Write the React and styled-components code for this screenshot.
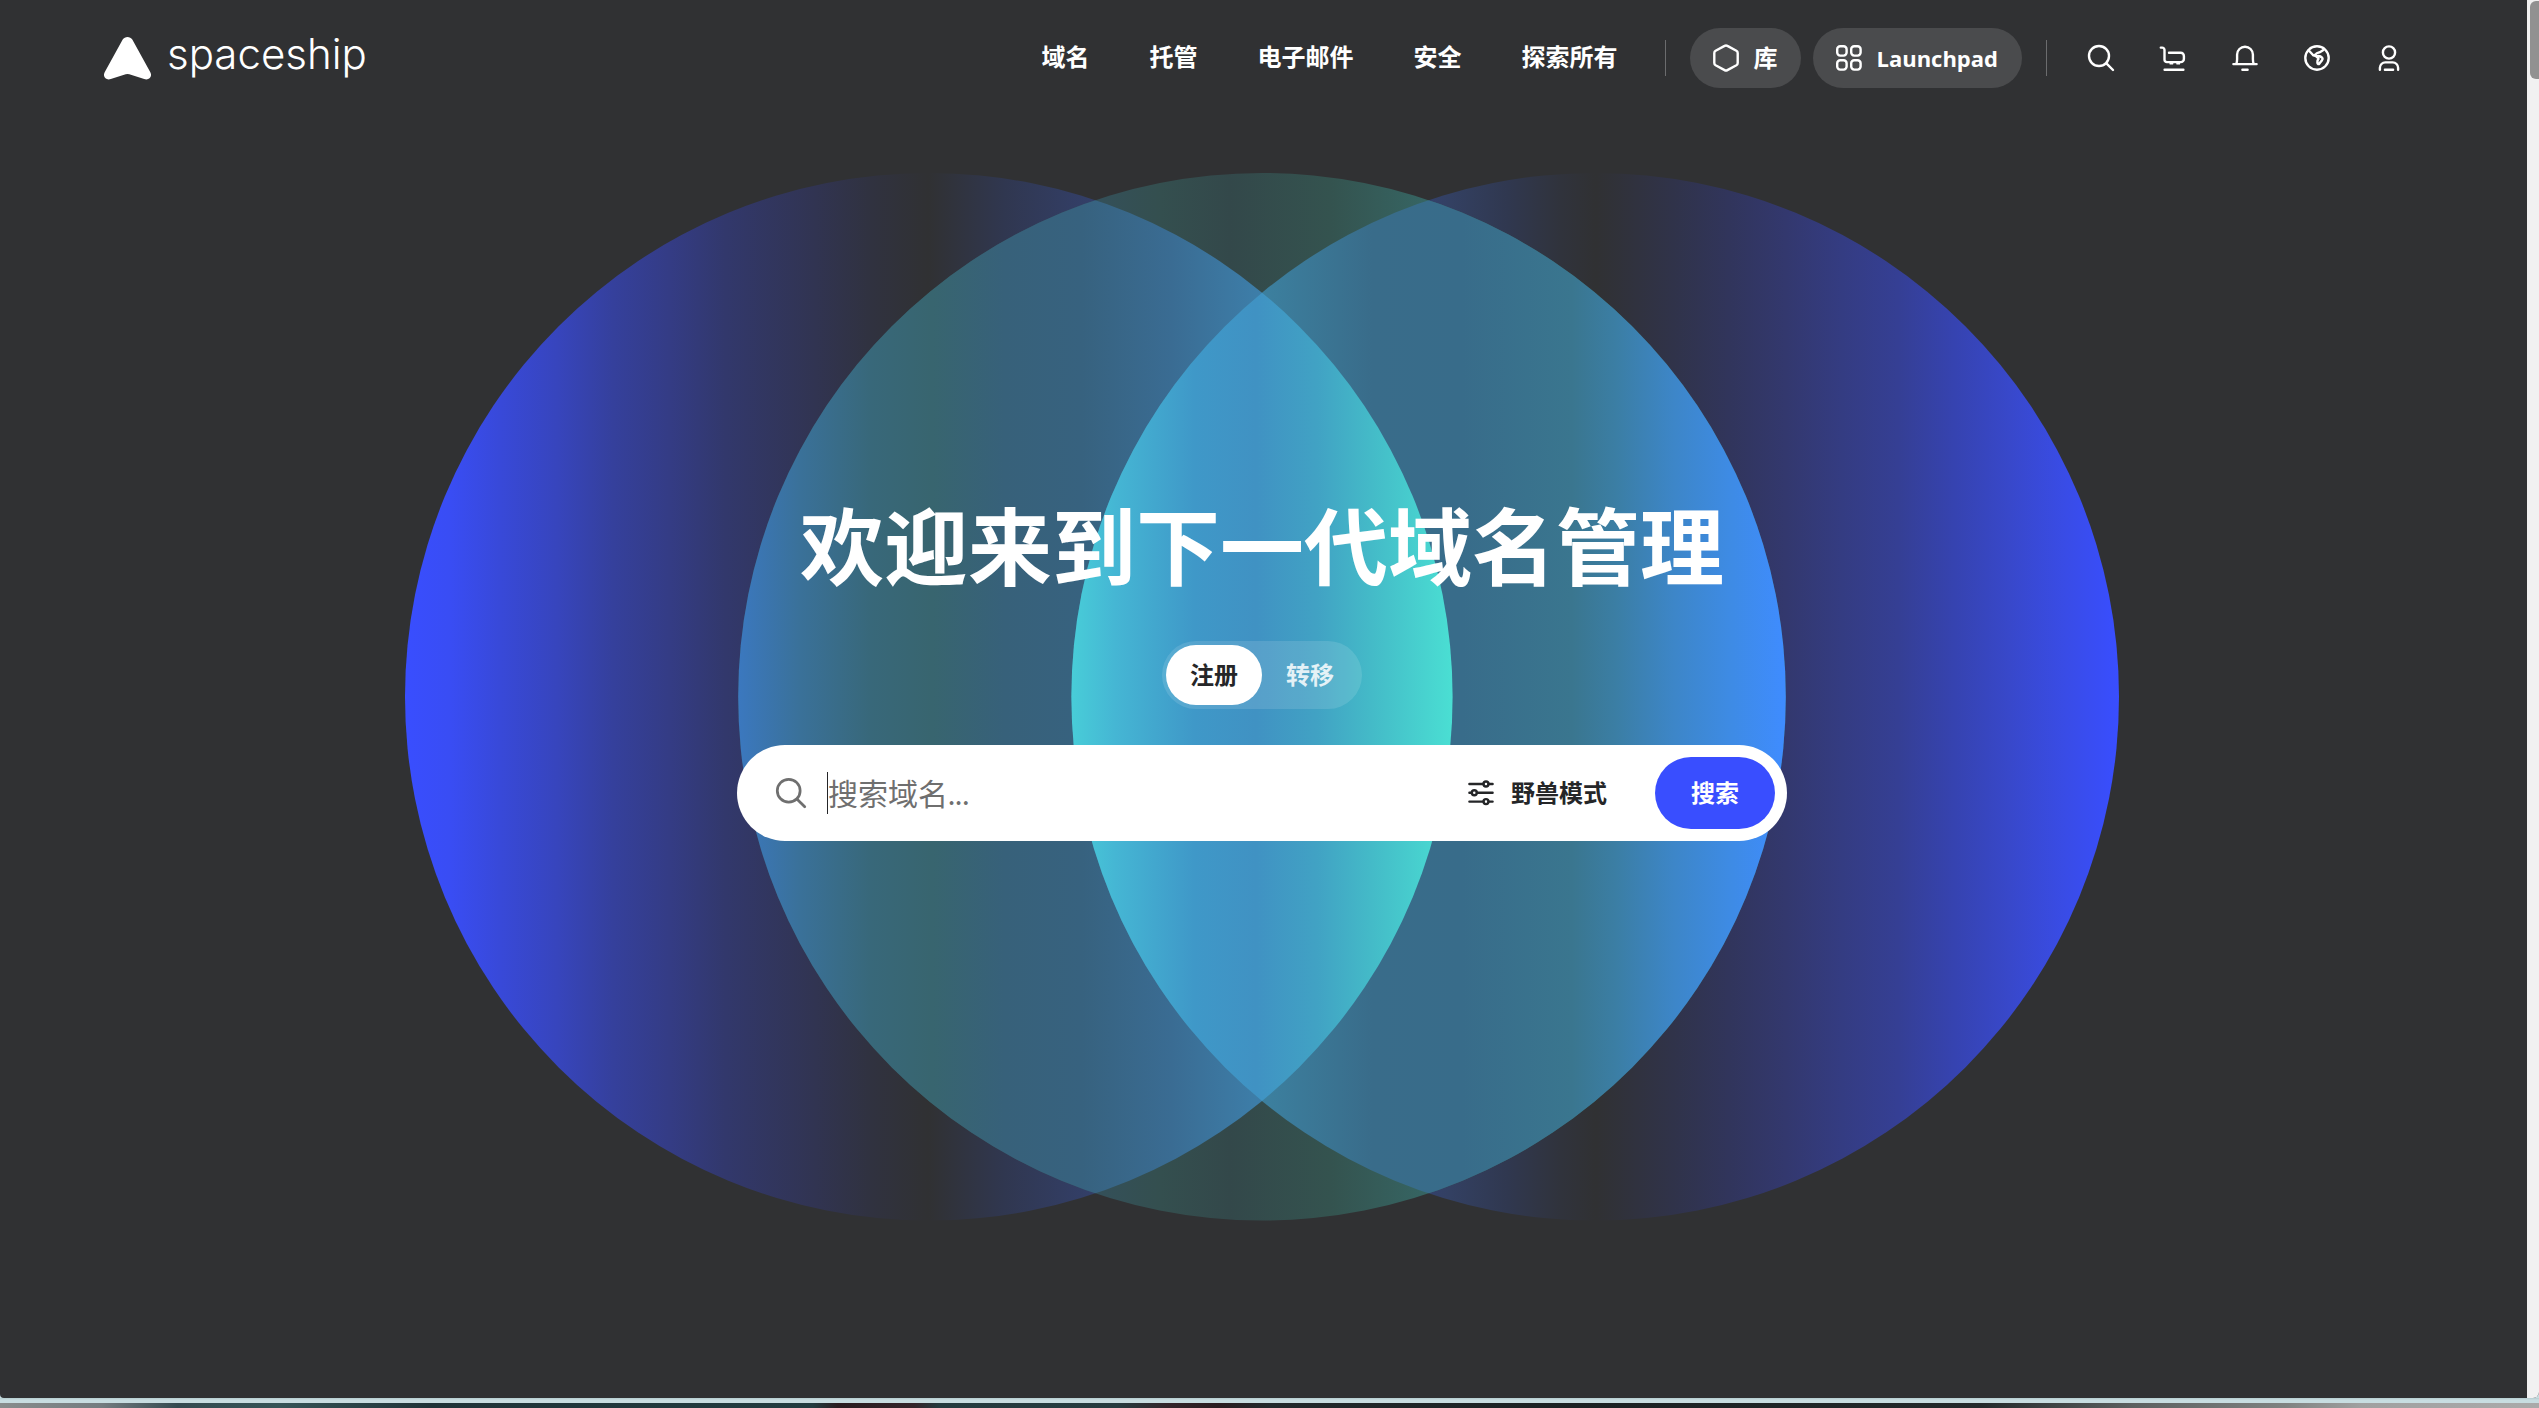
import React, { useState } from 'react';
import styled, { createGlobalStyle } from 'styled-components';

const navLinks = ['域名', '托管', '电子邮件', '安全', '探索所有'];

const modes = [
  { id: 'register', label: '注册' },
  { id: 'transfer', label: '转移' },
];

// gradient stops of every zone of the three circles, [x, colour]
const zones = {
  left: [
    [405, '#394eff'], [450, '#394df4'], [501, '#3849d8'], [557, '#3745bd'], [613, '#35409c'],
    [669, '#343c85'], [725, '#32386c'], [814, '#313452'], [870, '#303240'], [928, '#303133'],
    [1004, '#303750'], [1090, '#333f68'], [1452, '#394eff'],
  ],
  right: [
    [1071, '#394eff'], [1450, '#334062'], [1506, '#303850'], [1560, '#30333c'], [1595, '#303133'], [1673, '#30334a'],
    [1729, '#31355c'], [1785, '#33386e'], [1841, '#343c82'], [1897, '#353f94'], [1953, '#3643b0'],
    [2008, '#3848ca'], [2064, '#394ce6'], [2118, '#394eff'],
  ],
  middle: [[1094, '#34505a'], [1160, '#344f4f'], [1230, '#33484a'], [1330, '#34534f'], [1428, '#366563']],
  leftMiddle: [
    [738, '#3b78bf'], [800, '#3a7199'], [870, '#38687a'], [932, '#38656f'], [1004, '#37617a'],
    [1082, '#37627f'], [1171, '#3a6c93'], [1255, '#3d7da8'],
  ],
  middleRight: [
    [1268, '#3c7f9e'], [1372, '#396c8a'], [1461, '#386c8a'], [1571, '#3a768f'], [1615, '#3b7ea4'],
    [1673, '#3d86c8'], [1729, '#3e8be4'], [1785, '#3f8cff'],
  ],
  center: [
    [1071, '#48cdd8'], [1115, '#45b6d4'], [1194, '#3f98c8'], [1255, '#4092c3'], [1316, '#41a2c4'],
    [1372, '#44bbc8'], [1452, '#4adfd3'],
  ],
};

const HexIcon = () => (
  <Icon viewBox="0 0 28 28" aria-hidden="true">
    <path d="M12.6 1.9a2.8 2.8 0 0 1 2.8 0l9 4.9a2.6 2.6 0 0 1 1.3 2.3v9.8a2.6 2.6 0 0 1-1.3 2.3l-9 4.9a2.8 2.8 0 0 1-2.8 0l-9-4.9a2.6 2.6 0 0 1-1.3-2.3V9.1a2.6 2.6 0 0 1 1.3-2.3z" />
  </Icon>
);

const GridIcon = () => (
  <Icon viewBox="0 0 28 28" aria-hidden="true">
    <rect x="2.2" y="2.2" width="9.4" height="9.4" rx="3" />
    <rect x="16.2" y="2.2" width="9.4" height="9.4" rx="3" />
    <rect x="2.2" y="16.2" width="9.4" height="9.4" rx="3" />
    <rect x="16.2" y="16.2" width="9.4" height="9.4" rx="3" />
  </Icon>
);

const SearchIcon = ({ size }) => (
  <Icon viewBox="0 0 28 28" $size={size} aria-hidden="true">
    <circle cx="12" cy="12" r="10" />
    <path d="M19.4 19.4L26 26" />
  </Icon>
);

const CartIcon = () => (
  <Icon viewBox="0 0 28 28" aria-hidden="true">
    <path d="M1.8 3.6h1.4a2.3 2.3 0 0 1 2.3 2.3v9.8a2.4 2.4 0 0 0 2.4 2.4h13.8a3.2 3.2 0 0 0 3.2-3.2v-3a3.2 3.2 0 0 0-3.2-3.2H10" />
    <path d="M11.6 19.4h1.6M18.4 19.4H20M5.6 25.7h18.8" />
  </Icon>
);

const BellIcon = () => (
  <Icon viewBox="0 0 28 28" aria-hidden="true">
    <path d="M2.4 20.1h23.2M5.2 20.1c.7-1.5.9-3 .9-4.8v-4.7a7.9 7.9 0 0 1 15.8 0v4.7c0 1.8.2 3.3.9 4.8M11.4 25.7h5.2" />
  </Icon>
);

const GlobeIcon = () => (
  <Icon viewBox="0 0 28 28" aria-hidden="true">
    <circle cx="14" cy="14" r="11.7" />
    <path d="M5.6 6.2l4.2 4.6c1 1 2.4.4 3-.6.8-1.6 3-1.4 4.4-2.3l3.2-2" />
    <path d="M11 11.2l2.4 1.2c2-.8 4.2-.4 5.9 1.5.6.8.3 1.6-.3 2.3l-2.6 3.4c-.8.9-1.9.5-2-.6l.1-2.2c.1-.8 1-1.4 1-2.1 0-.9-1.7-.9-2.1-2.3" />
  </Icon>
);

const UserIcon = () => (
  <Icon viewBox="0 0 28 28" aria-hidden="true">
    <circle cx="14" cy="8.5" r="6.1" />
    <path d="M4.9 25.7v-1.9a5.4 5.4 0 0 1 5.4-5.4h7.4a5.4 5.4 0 0 1 5.4 5.4v1.9M9.9 25.7h8.2" />
  </Icon>
);

const SlidersIcon = () => (
  <Icon viewBox="0 0 28 28" aria-hidden="true">
    <path d="M2.4 5h14M21.6 5h4M2.4 13.8h2.3M9.9 13.8h15.7M2.4 22.6h14M21.6 22.6h4" />
    <circle cx="19" cy="5" r="2.5" />
    <circle cx="7.3" cy="13.8" r="2.5" />
    <circle cx="19" cy="22.6" r="2.5" />
  </Icon>
);

const Circles = () => (
  <Art viewBox="405 173 1713 1047" aria-hidden="true">
    <defs>
      {Object.entries(zones).map(([name, stops]) => {
        const start = stops[0][0];
        const end = stops[stops.length - 1][0];
        return (
          <linearGradient key={name} id={name} gradientUnits="userSpaceOnUse" x1={start} x2={end} y1="0" y2="0">
            {stops.map(([x, color]) => (
              <stop key={x} offset={(x - start) / (end - start)} stopColor={color} />
            ))}
          </linearGradient>
        );
      })}
      <clipPath id="insideLeft">
        <circle cx="928.5" cy="696.5" r="523.5" />
      </clipPath>
      <clipPath id="insideRight">
        <circle cx="1594.5" cy="696.5" r="523.5" />
      </clipPath>
    </defs>
    <circle cx="928.5" cy="696.5" r="523.5" fill="url(#left)" />
    <circle cx="1594.5" cy="696.5" r="523.5" fill="url(#right)" />
    <circle cx="1261.5" cy="696.5" r="523.5" fill="url(#middle)" />
    <circle cx="1261.5" cy="696.5" r="523.5" fill="url(#leftMiddle)" clipPath="url(#insideLeft)" />
    <circle cx="1261.5" cy="696.5" r="523.5" fill="url(#middleRight)" clipPath="url(#insideRight)" />
    <circle cx="928.5" cy="696.5" r="523.5" fill="url(#center)" clipPath="url(#insideRight)" />
  </Art>
);

const App = () => {
  const [mode, setMode] = useState('register');

  return (
    <Screen>
      <GlobalStyle />
      <Browser>
        <Page>
          <Header>
            <Logo href="#">
              <LogoMark viewBox="0 0 47 43" aria-hidden="true">
                <path d="M18.7 2.6C20.8-.8 26.2-.8 28.3 2.6L46.2 35.1C48.7 39.7 45.2 43.6 40.2 42.1L25.3 37.2Q23.5 36.7 21.7 37.2L6.8 42.1C1.8 43.6-1.7 39.7.8 35.1Z" />
              </LogoMark>
              <LogoText>spaceship</LogoText>
            </Logo>
            <Nav>
              {navLinks.map(link => (
                <NavLink key={link} href="#">{link}</NavLink>
              ))}
            </Nav>
            <Divider />
            <Pills>
              <Pill type="button"><HexIcon />库</Pill>
              <Pill type="button"><GridIcon /><Latin>Launchpad</Latin></Pill>
            </Pills>
            <Divider />
            <Actions>
              <IconButton type="button" aria-label="搜索"><SearchIcon /></IconButton>
              <IconButton type="button" aria-label="购物车"><CartIcon /></IconButton>
              <IconButton type="button" aria-label="通知"><BellIcon /></IconButton>
              <IconButton type="button" aria-label="语言"><GlobeIcon /></IconButton>
              <IconButton type="button" aria-label="账户"><UserIcon /></IconButton>
            </Actions>
          </Header>

          <Hero>
            <Circles />
            <HeroContent>
              <Title>欢迎来到下一代域名管理</Title>
              <Toggle>
                {modes.map(item => (
                  <ToggleButton
                    key={item.id}
                    type="button"
                    $active={mode === item.id}
                    aria-pressed={mode === item.id}
                    onClick={() => setMode(item.id)}
                  >
                    {item.label}
                  </ToggleButton>
                ))}
              </Toggle>
              <SearchBar onSubmit={e => e.preventDefault()}>
                <SearchLabel htmlFor="domain" aria-label="搜索域名">
                  <SearchIcon size="32px" />
                </SearchLabel>
                <SearchInput id="domain" type="text" placeholder="搜索域名..." />
                <BeastButton type="button"><SlidersIcon />野兽模式</BeastButton>
                <SubmitButton type="submit">搜索</SubmitButton>
              </SearchBar>
            </HeroContent>
          </Hero>
        </Page>
        <Scrollbar>
          <Thumb />
        </Scrollbar>
      </Browser>
      <WindowEdge />
      <Desktop />
    </Screen>
  );
};

const GlobalStyle = createGlobalStyle`
  * {
    box-sizing: border-box;
  }

  body {
    margin: 0;
    background: #c8dde1;
    font-family: Lato, "Noto Sans CJK SC", sans-serif;
  }

  button, input {
    font-family: inherit;
  }

  button {
    border: none;
    padding: 0;
    font-size: 24px;
    font-weight: 700;
    line-height: 36px;
    cursor: pointer;
  }
`;

const Screen = styled.div`
  display: flex;
  flex-direction: column;
  min-height: 100vh;
  overflow: hidden;
`;

const Browser = styled.div`
  flex: 1;
  display: flex;
  background: #303133;
  border-radius: 0 0 6px 4px;
  overflow: hidden;
`;

const Page = styled.div`
  flex: 1;
  min-width: 0;
  color: #fff;
`;

const Header = styled.header`
  display: flex;
  align-items: center;
  height: 116px;
  padding: 0 102px 0 104px;
`;

const Logo = styled.a`
  display: flex;
  align-items: center;
  gap: 16px;
  margin-right: auto;
  color: #fff;
  text-decoration: none;
`;

const LogoMark = styled.svg`
  width: 47px;
  height: 43px;
  fill: #fff;
`;

const LogoText = styled.span`
  padding-bottom: 8px;
  font-family: Inter, sans-serif;
  font-size: 42px;
  font-weight: 300;
  line-height: 48px;
`;

const Nav = styled.nav`
  display: flex;
  gap: 60px;
  padding-bottom: 2px;
`;

const NavLink = styled.a`
  color: #fff;
  font-size: 24px;
  font-weight: 700;
  line-height: 36px;
  text-decoration: none;
  white-space: nowrap;
`;

const Divider = styled.span`
  width: 1px;
  height: 36px;
  margin: 0 24px;
  background: #6b6c6e;

  ${Nav} + & {
    margin-left: 48px;
  }
`;

const Pills = styled.div`
  display: flex;
  gap: 12px;
`;

const Pill = styled.button`
  display: flex;
  align-items: center;
  gap: 13px;
  height: 60px;
  padding: 0 24px 0 22px;
  border-radius: 30px;
  background: #4a4b4d;
  color: #fff;
`;

const Latin = styled.span`
  font-family: "Open Sans", sans-serif;
  font-size: 22px;
`;

const Actions = styled.div`
  display: flex;
  margin-left: -6px;
`;

const IconButton = styled.button`
  display: flex;
  align-items: center;
  justify-content: center;
  width: 72px;
  height: 60px;
  background: none;
  color: #fff;
`;

const Icon = styled.svg`
  flex: none;
  width: ${props => props.$size || '28px'};
  height: ${props => props.$size || '28px'};
  fill: none;
  stroke: currentColor;
  stroke-width: 2.4;
  stroke-linecap: round;
  stroke-linejoin: round;
`;

const Hero = styled.main`
  display: grid;
  justify-items: center;
  align-items: start;
  padding: 57px 3px 0 0;
`;

const Art = styled.svg`
  grid-area: 1 / 1;
  width: 100%;
  max-width: 1714px;
`;

const HeroContent = styled.div`
  grid-area: 1 / 1;
  display: flex;
  flex-direction: column;
  align-items: center;
  width: 100%;
  max-width: 1050px;
  padding-top: 324px;
`;

const Title = styled.h1`
  margin: 0 0 44px;
  font-size: 84px;
  font-weight: 700;
  line-height: 100px;
  white-space: nowrap;
`;

const Toggle = styled.div`
  display: flex;
  margin-bottom: 36px;
  padding: 4px;
  border-radius: 34px;
  background: rgba(255, 255, 255, 0.12);
`;

const ToggleButton = styled.button`
  width: 96px;
  height: 60px;
  border-radius: 30px;
  background: ${props => (props.$active ? '#fff' : 'transparent')};
  color: ${props => (props.$active ? '#252628' : 'rgba(255, 255, 255, 0.85)')};
`;

const SearchBar = styled.form`
  display: flex;
  align-items: center;
  width: 100%;
  height: 96px;
  padding: 0 12px 0 38px;
  border-radius: 48px;
  background: #fff;
  color: #252628;
`;

const SearchLabel = styled.label`
  display: flex;
  margin-right: 20px;
  color: #6f6f6f;
`;

const SearchInput = styled.input`
  flex: 1;
  min-width: 0;
  height: 42px;
  padding: 0;
  border: none;
  border-left: 1px solid #252628;
  outline: none;
  background: none;
  color: #252628;
  font-size: 30px;

  &::placeholder {
    color: #6f6f6f;
    opacity: 1;
  }
`;

const BeastButton = styled.button`
  display: flex;
  align-items: center;
  gap: 16px;
  margin-right: 48px;
  background: none;
  color: #252628;
`;

const SubmitButton = styled.button`
  width: 120px;
  height: 72px;
  border-radius: 36px;
  background: #394eff;
  color: #fff;
`;

const Scrollbar = styled.div`
  width: 12px;
  padding: 1px 0 0 3px;
  background: #f1f1f1;
`;

const Thumb = styled.div`
  height: 78px;
  border-radius: 6px 0 0 6px;
  background: #919191;
`;

const WindowEdge = styled.div`
  height: 5px;
  background: linear-gradient(#b4cccf, #c8dde1 40%);
`;

const Desktop = styled.div`
  height: 5px;
  background: linear-gradient(
    90deg,
    #888c8c 0%, #747c80 4%, #344a50 7%, #355457 11%, #1f3338 17%, #223c40 32%,
    #2a1c20 33%, #33242a 36%, #243a3e 37%, #263c40 44%, #33242a 46%, #2a1c20 48%,
    #22292c 50%, #1b2123 62%, #23292b 78%, #5c6060 84%, #7f8281 90%, #a0a0a0 93%, #aaaaaa 100%
  );
`;

export default App;
